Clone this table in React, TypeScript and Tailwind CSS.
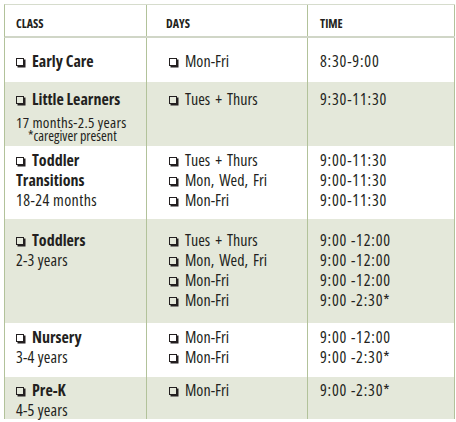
import React from "react";

const font = { fontFamily: '"Open Sans", "Liberation Sans", sans-serif' };

type Row = {
  name: string[];
  sub?: React.ReactNode;
  days: string[];
  times: string[];
  shaded: boolean;
  h: string;
  pt: string;
};

const rows: Row[] = [
  { name: ["Early Care"], days: ["Mon-Fri"], times: ["8:30-9:00"], shaded: false, h: "h-[44px]", pt: "pt-[13px]" },
  {
    name: ["Little Learners"],
    sub: (
      <div>
        <div className="text-[15px] leading-[16px] mt-[5px] tracking-[0.3px]">17 months-2.5 years</div>
        <div className="text-[14px] pl-[12px] leading-[9px] mt-[1px]">*caregiver present</div>
      </div>
    ),
    days: ["Tues + Thurs"],
    times: ["9:30-11:30"],
    shaded: true,
    h: "h-[64px]",
    pt: "pt-[7px]",
  },
  {
    name: ["Toddler", "Transitions"],
    sub: <div className="tracking-[0.4px]">18-24 months</div>,
    days: ["Tues + Thurs", "Mon, Wed, Fri", "Mon-Fri"],
    times: ["9:00-11:30", "9:00-11:30", "9:00-11:30"],
    shaded: false,
    h: "h-[73px]",
    pt: "pt-[4px]",
  },
  {
    name: ["Toddlers"],
    sub: <div className="tracking-[0.2px]">2-3 years</div>,
    days: ["Tues + Thurs", "Mon, Wed, Fri", "Mon-Fri", "Mon-Fri"],
    times: ["9:00 -12:00", "9:00 -12:00", "9:00 -12:00", "9:00 -2:30*"],
    shaded: true,
    h: "h-[104px]",
    pt: "pt-[11px]",
  },
  {
    name: ["Nursery"],
    sub: <div className="tracking-[0.2px]">3-4 years</div>,
    days: ["Mon-Fri", "Mon-Fri"],
    times: ["9:00 -12:00", "9:00 -2:30*"],
    shaded: false,
    h: "h-[54px]",
    pt: "pt-[4px]",
  },
  {
    name: ["Pre-K"],
    sub: <div className="tracking-[0.2px]">4-5 years</div>,
    days: ["Mon-Fri"],
    times: ["9:00 -2:30*"],
    shaded: true,
    h: "h-[42px]",
    pt: "pt-[3px]",
  },
];

function Box() {
  return (
    <span className="inline-block w-[8px] h-[8px] border border-[#231f20] shadow-[1.5px_1.5px_0_#231f20] mr-[8px] mb-[1px] align-baseline" />
  );
}

export default function App() {
  return (
    <div className="bg-white w-[456px] h-[422px] text-[#231f20] font-stretch-condensed whitespace-nowrap" style={font}>
      <div className="ml-[4px] pt-[4px] w-[451px]">
        <div className="flex h-[34px] border-t border-[#d6dccd] border-b-2 border-b-[#d0d6c7] border-l border-l-[#b2c29a] text-[12px] font-bold leading-[16px]">
          <div className="w-[142px] border-r border-[#b2c29a] pl-[11px] pt-[11px]">CLASS</div>
          <div className="w-[161px] border-r border-[#b2c29a] pl-[19px] pt-[11px]">DAYS</div>
          <div className="w-[147px] border-r border-[#b2c29a] pl-[12px] pt-[11px]">TIME</div>
        </div>
        {rows.map((r, i) => (
          <div
            key={i}
            className={`flex ${r.h} border-l border-[#b2c29a] text-[16px] leading-[20px] ${r.shaded ? "bg-[#e4e8da]" : "bg-white"}`}
          >
            <div className={`w-[142px] border-r border-[#b2c29a] pl-[11px] ${r.pt}`}>
              <div className="font-bold">
                <Box />
                {r.name[0]}
                {r.name[1] && (
                  <>
                    <br />
                    {r.name[1]}
                  </>
                )}
              </div>
              {r.sub}
            </div>
            <div className={`w-[161px] border-r border-[#b2c29a] pl-[22px] [word-spacing:2px] ${r.pt}`}>
              {r.days.map((d, j) => (
                <div key={j}>
                  <Box />
                  {d}
                </div>
              ))}
            </div>
            <div className={`w-[147px] border-r border-[#b2c29a] pl-[12px] tracking-[0.8px] ${r.pt}`}>
              {r.times.map((t, j) => (
                <div key={j}>{t}</div>
              ))}
            </div>
          </div>
        ))}
      </div>
    </div>
  );
}
